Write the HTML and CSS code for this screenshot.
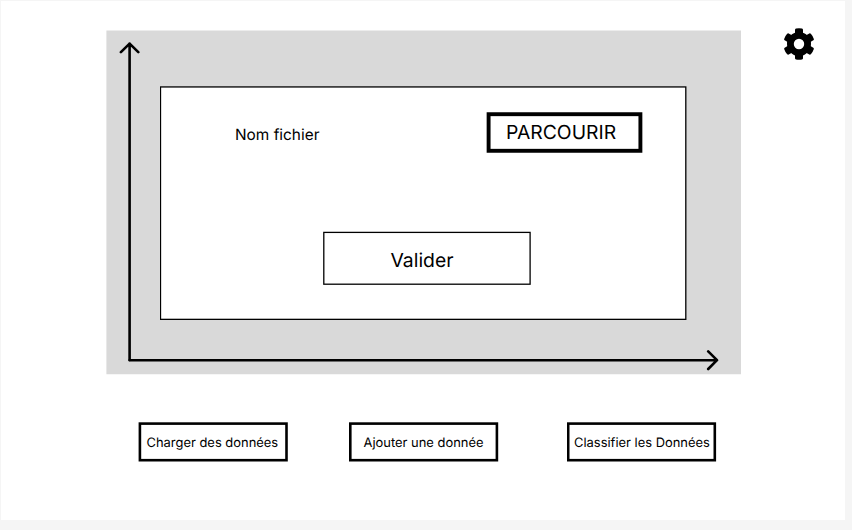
FILE: index.html
```html
<!DOCTYPE html>
<html lang="fr">
<head>
<meta charset="utf-8">
<title>Données</title>
<link rel="stylesheet" href="styles.css">
</head>
<body>
<div class="screen">
  <main class="main">
    <section class="chart">
      <svg class="frame" viewBox="0 0 636 346"><path class="panel" d="M.4 .4H635V344.3H.4z"/><g class="axis"><path d="M23.6 330V13.6M14.9 22.2l8.7-8.6 8.7 8.6"/><path d="M23.6 330.2H611M602.2 321.4l8.8 8.8-8.8 8.8"/></g></svg>
      <div class="dialog">
        <svg class="frame" viewBox="0 0 527 234"><rect class="thin white" x=".5" y=".95" width="525.3" height="232.4"/></svg>
        <div class="file-row">
          <span class="file-name">Nom fichier</span>
          <button class="browse"><svg class="frame" viewBox="0 0 157 41"><rect class="thick" x="2.6" y="2.2" width="151.8" height="36.6"/></svg><span>PARCOURIR</span></button>
        </div>
        <button class="submit"><svg class="frame" viewBox="0 0 208 54"><rect class="thin" x=".8" y="1.4" width="206.3" height="51.8"/></svg><span>Valider</span></button>
      </div>
    </section>
    <nav class="actions">
      <button class="action"><svg class="frame" viewBox="0 0 150 40"><rect class="medium" x="1.9" y="1.6" width="146.6" height="36.6"/></svg><span class="load">Charger des données</span></button>
      <button class="action"><svg class="frame" viewBox="0 0 150 40"><rect class="medium" x="1.3" y="1.6" width="146.6" height="36.6"/></svg><span class="add">Ajouter une donnée</span></button>
      <button class="action"><svg class="frame" viewBox="0 0 150 40"><rect class="medium" x="1.2" y="1.6" width="146.6" height="36.6"/></svg><span class="sort">Classifier les Données</span></button>
    </nav>
  </main>
  <svg class="settings" viewBox="-19 -19 38 38">
    <circle class="ring" r="8.6"/>
    <path d="M-4-9V-14.2Q-4-15-3-15.4Q0-16.1 3-15.4Q4-15 4-14.2V-9z"/>
    <path transform="rotate(60)" d="M-4-9V-14.2Q-4-15-3-15.4Q0-16.1 3-15.4Q4-15 4-14.2V-9z"/>
    <path transform="rotate(120)" d="M-4-9V-14.2Q-4-15-3-15.4Q0-16.1 3-15.4Q4-15 4-14.2V-9z"/>
    <path transform="rotate(180)" d="M-4-9V-14.2Q-4-15-3-15.4Q0-16.1 3-15.4Q4-15 4-14.2V-9z"/>
    <path transform="rotate(240)" d="M-4-9V-14.2Q-4-15-3-15.4Q0-16.1 3-15.4Q4-15 4-14.2V-9z"/>
    <path transform="rotate(300)" d="M-4-9V-14.2Q-4-15-3-15.4Q0-16.1 3-15.4Q4-15 4-14.2V-9z"/>
  </svg>
</div>
</body>
</html>
```
FILE: styles.css
```css
* { box-sizing: border-box; }
body {
  margin: 0;
  height: 530px;
  overflow: hidden;
  background: #f5f5f5;
  font-family: Inter, sans-serif;
  color: #000;
  text-rendering: geometricPrecision;
}
.screen {
  display: flex;
  align-items: flex-start;
  width: 844px;
  height: 519px;
  margin: 1px 0 0 1px;
  padding: 29px 0 0 105px;
  background: #fff;
}
.main { width: 636px; }
.chart {
  position: relative;
  height: 346px;
  padding: 56px 0 0 54px;
}
.frame {
  position: absolute;
  inset: 0;
  width: 100%;
  height: 100%;
}
.panel { fill: #d9d9d9; }
.axis {
  fill: none;
  stroke: #000;
  stroke-width: 2.6;
  stroke-linecap: round;
  stroke-linejoin: round;
}
rect { fill: none; stroke: #000; }
.white { fill: #fff; }
.thin { stroke-width: 1.3; }
.medium { stroke-width: 2.6; }
.thick { stroke-width: 3.9; }
.dialog {
  position: relative;
  width: 527px;
  height: 234px;
  padding: 26px 0 0 75px;
}
.file-row {
  position: relative;
  display: flex;
  justify-content: space-between;
  width: 408px;
}
.file-name {
  font-size: 15.4px;
  line-height: 20px;
  margin-top: 13px;
}
button {
  position: relative;
  display: flex;
  padding: 0;
  border: 0;
  background: none;
  font-family: inherit;
  color: inherit;
  text-rendering: inherit;
  white-space: nowrap;
}
button span { position: relative; }
.browse {
  width: 157px;
  height: 41px;
  padding: 8px 0 0 20px;
  font-size: 19.35px;
  line-height: 24px;
}
.submit {
  width: 208px;
  height: 54px;
  margin: 78px 0 0 88px;
  padding: 17px 0 0 67.5px;
  font-size: 19.35px;
  line-height: 24px;
}
.actions {
  display: flex;
  margin: 46px 0 0 32px;
}
.action {
  width: 150px;
  height: 40px;
  padding-top: 13px;
  font-size: 12.93px;
  line-height: 16px;
}
.action:nth-child(2) { margin-left: 61px; }
.action:nth-child(3) { margin-left: 68px; }
.load { margin-left: 8.5px; }
.add { margin-left: 14.5px; }
.sort { margin-left: 7px; }
.settings {
  flex: none;
  width: 38px;
  height: 38px;
  margin: -5px 0 0 38px;
}
.ring {
  fill: none;
  stroke: #000;
  stroke-width: 6.8;
}
```
